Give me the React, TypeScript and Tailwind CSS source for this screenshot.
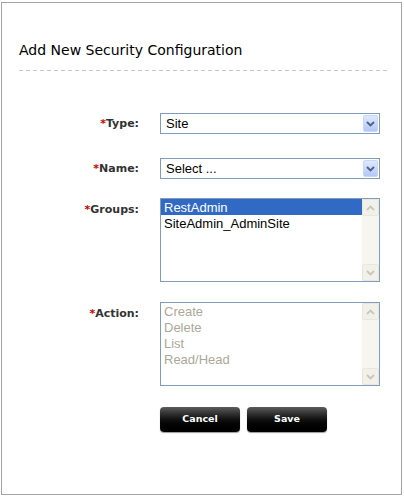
import React from 'react'

const labelCls =
  "w-[137px] shrink-0 text-right font-['DejaVu_Sans',sans-serif] text-[11px] font-bold leading-[14px] text-[#333]"

function Label({ text }: { text: string }) {
  return (
    <div className={labelCls}>
      <span className="text-[#cc0000]">*</span>
      {text}
    </div>
  )
}

function Chevron({ color }: { color: string }) {
  return (
    <svg width="9" height="6" viewBox="0 0 9 6">
      <path d="M1 1 L4.5 4.5 L8 1" fill="none" stroke={color} strokeWidth="1.8" />
    </svg>
  )
}

function Select({ value }: { value: string }) {
  return (
    <div className="w-[220px] h-[21px] border border-[#7f9db9] bg-white flex items-center">
      <span className="flex-1 pl-[5px] font-['Liberation_Sans',Arial,sans-serif] text-[13px] leading-[16px] text-black">
        {value}
      </span>
      <div className="w-[15px] h-[17px] mr-px rounded-[2px] border border-[#c8d6f8] bg-gradient-to-b from-[#dfe8fe] to-[#b4c8f6] flex items-center justify-center">
        <Chevron color="#4d6185" />
      </div>
    </div>
  )
}

function ScrollBtn({ up }: { up: boolean }) {
  return (
    <div className="w-[17px] h-[17px] rounded-[2px] border border-[#e8e7df] bg-[#f1f0e9] flex items-center justify-center">
      <div className={up ? 'rotate-180' : ''}>
        <Chevron color="#c9c7ba" />
      </div>
    </div>
  )
}

function ListBox({
  items,
  selected,
  disabled,
}: {
  items: string[]
  selected?: number
  disabled?: boolean
}) {
  return (
    <div className="w-[220px] h-[84px] border border-[#7f9db9] bg-white flex">
      <div className="flex-1">
        {items.map((it, i) => (
          <div
            key={it}
            className={
              "h-[16px] pl-[3px] pt-px font-['Liberation_Sans',Arial,sans-serif] text-[13px] leading-[15px] " +
              (i === selected
                ? 'bg-[#316ac5] text-white'
                : disabled
                  ? 'text-[#aca899]'
                  : 'text-black')
            }
          >
            {it}
          </div>
        ))}
      </div>
      <div className="w-[17px] bg-[#f6f5f0] flex flex-col justify-between">
        <ScrollBtn up />
        <ScrollBtn up={false} />
      </div>
    </div>
  )
}

function Button({ text }: { text: string }) {
  return (
    <button className="w-[80px] h-[25px] rounded-[4px] bg-gradient-to-b from-[#5c5c5c] via-[#111] to-[#000] shadow-[0_1px_1px_#9a9a9a] font-['DejaVu_Sans',sans-serif] text-[9.5px] font-bold text-white">
      {text}
    </button>
  )
}

export default function App() {
  return (
    <div className="w-[404px] h-[497px] bg-white pl-px pt-[2px]">
      <div className="w-[401px] h-[493px] border border-[#a3a3a3] flex flex-col">
        <div className="pl-[17px] pt-[38px]">
          <h2 className="font-['DejaVu_Sans',sans-serif] text-[14px] leading-[18px] text-black">
            Add New Security Configuration
          </h2>
          <div className="mt-[11px] w-[370px] h-px bg-[repeating-linear-gradient(90deg,#c8c8c8_0_4px,transparent_4px_7px)]" />
        </div>

        <div className="flex flex-col">
          <div className="mt-[42px] flex items-center gap-[21px]">
            <Label text="Type:" />
            <Select value="Site" />
          </div>
          <div className="mt-[24px] flex items-center gap-[21px]">
            <Label text="Name:" />
            <Select value="Select ..." />
          </div>
          <div className="mt-[19px] flex items-start gap-[21px]">
            <div className="pt-[5px]">
              <Label text="Groups:" />
            </div>
            <ListBox items={['RestAdmin', 'SiteAdmin_AdminSite']} selected={0} />
          </div>
          <div className="mt-[20px] flex items-start gap-[21px]">
            <div className="pt-[5px]">
              <Label text="Action:" />
            </div>
            <ListBox items={['Create', 'Delete', 'List', 'Read/Head']} disabled />
          </div>
          <div className="mt-[21px] pl-[158px] flex gap-[7px]">
            <Button text="Cancel" />
            <Button text="Save" />
          </div>
        </div>
      </div>
    </div>
  )
}
